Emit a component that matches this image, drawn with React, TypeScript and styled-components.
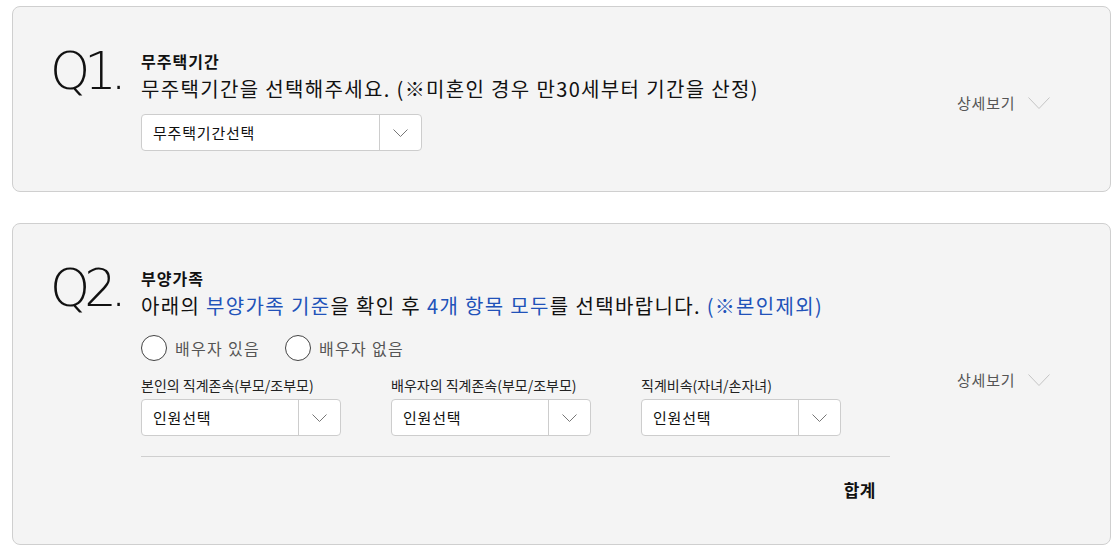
import styled, { createGlobalStyle } from "styled-components";

const GlobalStyle = createGlobalStyle`
  html, body {
    margin: 0;
    padding: 0;
    background: #fff;
  }
  body {
    font-family: "Noto Sans CJK KR", "Noto Sans", sans-serif;
    color: #111;
  }
`;

const Page = styled.div`
  display: flex;
  flex-direction: column;
  gap: 31px;
  padding: 6px 9px 0 12px;
`;

const Card = styled.section<{ $h: number }>`
  display: flex;
  box-sizing: border-box;
  height: ${(p) => p.$h}px;
  padding: 44px 0 0 42px;
  background: #f4f4f4;
  border: 1px solid #cfcfcf;
  border-radius: 8px;
`;

const QNum = styled.div`
  width: 86px;
  flex-shrink: 0;
  font-family: "DejaVu Sans", sans-serif;
  font-weight: 200;
  font-size: 51px;
  line-height: 50px;
  letter-spacing: -6px;
  color: #111;
  margin: -4px 0 0 -5px;
  padding-right: 5px;
`;

const Body = styled.div`
  flex: 1;
  display: flex;
  flex-direction: column;
`;

const Title = styled.h3`
  margin: 0;
  font-size: 16px;
  font-weight: 700;
  line-height: 20px;
  letter-spacing: 1px;
`;

const Subtitle = styled.p`
  margin: 4px 0 0;
  font-size: 20px;
  line-height: 28px;
  letter-spacing: 1.35px;
`;

const Blue = styled.span`
  color: #2152b9;
`;

const SelectBox = styled.div<{ $w: number }>`
  display: flex;
  box-sizing: border-box;
  width: ${(p) => p.$w}px;
  height: 37px;
  background: #fff;
  border: 1px solid #cdcdcd;
  border-radius: 4px;
`;

const SelectText = styled.span`
  flex: 1;
  display: flex;
  align-items: center;
  padding-left: 11px;
  font-size: 15px;
  letter-spacing: 0.8px;
`;

const SelectArrow = styled.span`
  width: 41px;
  display: flex;
  align-items: center;
  justify-content: center;
  border-left: 1px solid #cdcdcd;
`;

const Detail = styled.div<{ $top: number }>`
  align-self: flex-start;
  display: flex;
  align-items: center;
  gap: 13px;
  width: 153px;
  margin-top: ${(p) => p.$top}px;
  font-size: 15px;
  line-height: 20px;
  letter-spacing: 0.8px;
  color: #555;
`;

const RadioRow = styled.div`
  display: flex;
  gap: 25px;
  margin-top: 15px;
`;

const Radio = styled.label`
  display: flex;
  align-items: center;
  gap: 8px;
  font-size: 16px;
  letter-spacing: 1.3px;
  color: #555;
`;

const Circle = styled.span`
  width: 26px;
  height: 26px;
  box-sizing: border-box;
  border: 1px solid #444;
  border-radius: 50%;
  background: #fff;
`;

const SelectGrid = styled.div`
  display: flex;
  gap: 50px;
  margin-top: 15px;
`;

const Field = styled.div`
  display: flex;
  flex-direction: column;
  gap: 4px;
`;

const FieldLabel = styled.span`
  font-size: 14px;
  line-height: 19px;
  letter-spacing: 0;
  color: #222;
`;

const Divider = styled.hr`
  width: 749px;
  margin: 20px 0 0;
  border: 0;
  border-top: 1px solid #cfcfcf;
`;

const Total = styled.div`
  width: 735px;
  margin-top: 20px;
  text-align: right;
  font-size: 17px;
  font-weight: 700;
  letter-spacing: 0.5px;
`;

const Chevron = ({ w, h, color }: { w: number; h: number; color: string }) => (
  <svg width={w} height={h} viewBox={`0 0 ${w} ${h}`}>
    <path d={`M0.5 0.5 L${w / 2} ${h - 0.5} L${w - 0.5} 0.5`} fill="none" stroke={color} strokeWidth="1" />
  </svg>
);

const Select = ({ w, text }: { w: number; text: string }) => (
  <SelectBox $w={w}>
    <SelectText>{text}</SelectText>
    <SelectArrow>
      <Chevron w={15} h={8} color="#777" />
    </SelectArrow>
  </SelectBox>
);

const More = ({ top }: { top: number }) => (
  <Detail $top={top}>
    상세보기
    <Chevron w={22} h={12} color="#c4c4c4" />
  </Detail>
);

export default function App() {
  return (
    <>
      <GlobalStyle />
      <Page>
        <Card $h={186}>
          <QNum>Q1.</QNum>
          <Body>
            <Title>무주택기간</Title>
            <Subtitle>무주택기간을 선택해주세요. (※미혼인 경우 만30세부터 기간을 산정)</Subtitle>
            <div style={{ marginTop: 11 }}>
              <Select w={281} text="무주택기간선택" />
            </div>
          </Body>
          <More top={42} />
        </Card>
        <Card $h={322}>
          <QNum>Q2.</QNum>
          <Body>
            <Title>부양가족</Title>
            <Subtitle>
              아래의 <Blue>부양가족 기준</Blue>을 확인 후 <Blue>4개 항목 모두</Blue>를 선택바랍니다.{" "}
              <Blue>(※본인제외)</Blue>
            </Subtitle>
            <RadioRow>
              <Radio>
                <Circle />
                배우자 있음
              </Radio>
              <Radio>
                <Circle />
                배우자 없음
              </Radio>
            </RadioRow>
            <SelectGrid>
              <Field>
                <FieldLabel>본인의 직계존속(부모/조부모)</FieldLabel>
                <Select w={200} text="인원선택" />
              </Field>
              <Field>
                <FieldLabel>배우자의 직계존속(부모/조부모)</FieldLabel>
                <Select w={200} text="인원선택" />
              </Field>
              <Field>
                <FieldLabel>직계비속(자녀/손자녀)</FieldLabel>
                <Select w={200} text="인원선택" />
              </Field>
            </SelectGrid>
            <Divider />
            <Total>합계</Total>
          </Body>
          <More top={102} />
        </Card>
      </Page>
    </>
  );
}
